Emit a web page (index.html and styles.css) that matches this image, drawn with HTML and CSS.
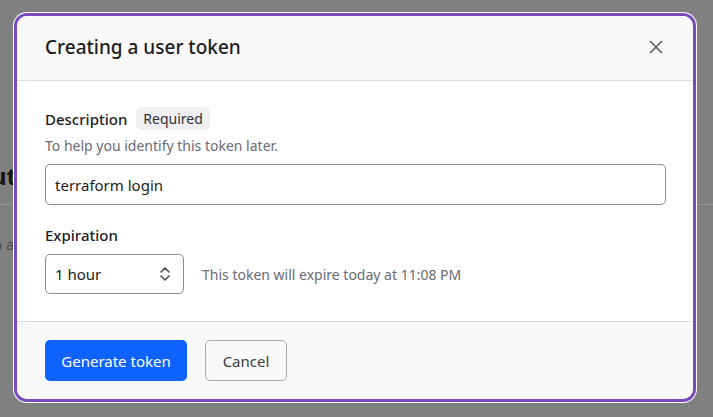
FILE: index.html
```html
<!DOCTYPE html>
<html>
<head>
<meta charset="utf-8">
<link rel="stylesheet" href="styles.css">
</head>
<body>
<div class="page">
  <div class="bg-head">ut</div>
  <div class="bg-rule"></div>
  <div class="bg-text">o a</div>
</div>
<div class="backdrop">
  <div class="dialog">
    <div class="dlg-header">
      <h2 class="dlg-title">Creating a user token</h2>
      <button class="close" aria-label="Close">
        <svg width="14" height="14" viewBox="0 0 14 14"><path d="M1.5 1.5 L12.5 12.5 M12.5 1.5 L1.5 12.5" stroke="#5f5f68" stroke-width="1.7" stroke-linecap="round" fill="none"/></svg>
      </button>
    </div>
    <div class="dlg-body">
      <div class="label-row">
        <span class="label">Description</span>
        <span class="badge">Required</span>
      </div>
      <div class="help">To help you identify this token later.</div>
      <div class="input">terraform login</div>
      <div class="label exp-label">Expiration</div>
      <div class="exp-row">
        <div class="select">
          <span>1 hour</span>
          <svg width="12" height="16" viewBox="0 0 12 16"><path d="M2 6 L6 2 L10 6 M2 10 L6 14 L10 10" stroke="#4a4a52" stroke-width="1.6" fill="none" stroke-linecap="round" stroke-linejoin="round"/></svg>
        </div>
        <span class="hint">This token will expire today at 11:08 PM</span>
      </div>
    </div>
    <div class="dlg-footer">
      <button class="btn primary">Generate token</button>
      <button class="btn secondary">Cancel</button>
    </div>
  </div>
</div>
</body>
</html>
```

FILE: styles.css
```css
* { box-sizing: border-box; }
html, body { margin: 0; padding: 0; }
body {
  width: 713px;
  height: 417px;
  overflow: hidden;
  position: relative;
  font-family: "Noto Sans", "Open Sans", sans-serif;
  background: #808080;
}
.page {
  padding-top: 161px;
}
.bg-head {
  font-size: 24px;
  font-weight: 700;
  color: #141414;
  line-height: 30px;
  margin-left: -9px;
}
.bg-rule {
  margin-top: 13px;
  height: 1px;
  background: #949494;
}
.bg-text {
  margin-top: 29px;
  margin-left: -7px;
  font-size: 15px;
  color: #4a4a4a;
}
.backdrop {
  position: absolute;
  inset: 0;
  padding: 16px 20px 18px 17px;
}
.dialog {
  width: 676px;
  height: 383px;
  background: #fff;
  border-radius: 10px;
  box-shadow: 0 0 0 3px #7a4bbd, 0 0 0 4px #ffffff, inset -1px -1px 0 #5c5c5c;
  display: flex;
  flex-direction: column;
  overflow: hidden;
}
.dlg-header {
  height: 65px;
  flex: none;
  background: #f9f9f9;
  border-bottom: 1px solid #dcdce0;
  display: flex;
  align-items: center;
  justify-content: space-between;
  padding: 0 30px 2px 28px;
}
.dlg-title {
  margin: 0;
  font-size: 19px;
  font-weight: 500;
  color: #1c1c22;
}
.close {
  border: 0;
  background: none;
  padding: 0;
  width: 14px;
  height: 14px;
  display: flex;
}
.dlg-body {
  flex: 1;
  padding: 26px 27px 0 28px;
  background: #fff;
}
.label-row {
  display: flex;
  align-items: center;
  gap: 9px;
}
.label {
  font-size: 15px;
  font-weight: 500;
  color: #1c1c22;
}
.badge {
  background: #f0f0f2;
  border-radius: 6px;
  padding: 2px 7px;
  font-size: 14px;
  color: #2e2e36;
}
.help {
  margin-top: 6px;
  font-size: 14px;
  color: #6b6b75;
}
.input {
  margin-top: 9px;
  height: 41px;
  border: 1px solid #8b8b96;
  border-radius: 5px;
  padding: 0 9px;
  display: flex;
  align-items: center;
  font-size: 15px;
  color: #1c1c22;
}
.exp-label {
  display: block;
  margin-top: 20px;
}
.exp-row {
  margin-top: 9px;
  display: flex;
  align-items: center;
  gap: 18px;
}
.select {
  width: 139px;
  height: 40px;
  border: 1px solid #8b8b96;
  border-radius: 5px;
  padding: 0 12px 0 9px;
  display: flex;
  align-items: center;
  justify-content: space-between;
  font-size: 15px;
  color: #1c1c22;
}
.hint {
  font-size: 14px;
  color: #6b6b75;
}
.dlg-footer {
  height: 78px;
  flex: none;
  background: #f9f9f9;
  border-top: 1px solid #dcdce0;
  display: flex;
  align-items: center;
  gap: 18px;
  padding: 0 28px;
}
.btn {
  font-family: inherit;
  font-size: 15px;
  border-radius: 5px;
  height: 41px;
  cursor: pointer;
}
.primary {
  width: 142px;
  background: #0f62fe;
  color: #fff;
  border: 0;
}
.secondary {
  width: 82px;
  background: #f9f9f9;
  color: #3c3c44;
  border: 1px solid #a9a9b0;
}
```
